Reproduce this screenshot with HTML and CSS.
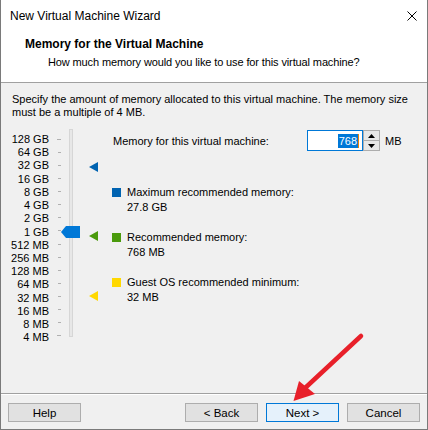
FILE: index.html
```html
<!DOCTYPE html>
<html>
<head>
<meta charset="utf-8">
<link rel="stylesheet" href="styles.css">
</head>
<body>
<div class="window">
  <div class="titlebar">
    <span class="title">New Virtual Machine Wizard</span>
    <svg class="close" width="10" height="10" viewBox="0 0 10 10"><path d="M0.5 0.5 L9.5 9.5 M9.5 0.5 L0.5 9.5" stroke="#000" stroke-width="1" fill="none"/></svg>
  </div>
  <div class="header">
    <div class="h-title">Memory for the Virtual Machine</div>
    <div class="h-sub">How much memory would you like to use for this virtual machine?</div>
  </div>
  <div class="content">
    <p class="intro"><span>Specify the amount of memory allocated to this virtual machine. The memory size</span><span>must be a multiple of 4 MB.</span></p>
    <div class="main">
      <div class="slider">
        <div class="labels">
          <span>128 GB</span><span>64 GB</span><span>32 GB</span><span>16 GB</span><span>8 GB</span><span>4 GB</span><span>2 GB</span><span>1 GB</span><span>512 MB</span><span>256 MB</span><span>128 MB</span><span>64 MB</span><span>32 MB</span><span>16 MB</span><span>8 MB</span><span>4 MB</span>
        </div>
        <div class="ticks">
          <i class="long"></i><i></i><i></i><i></i><i></i><i></i><i></i><i></i><i></i><i></i><i></i><i></i><i></i><i></i><i></i><i class="long"></i>
        </div>
        <div class="track"></div>
        <svg class="thumb" width="19" height="12" viewBox="0 0 19 12"><path d="M0 6 L5 0 H19 V12 H5 Z" fill="#0078d7"/></svg>
        <svg class="marker m-max" width="9" height="10" viewBox="0 0 9 10"><path d="M0 5 L9 0 V10 Z" fill="#0063b1"/></svg>
        <svg class="marker m-rec" width="9" height="10" viewBox="0 0 9 10"><path d="M0 5 L9 0 V10 Z" fill="#4a9a0c"/></svg>
        <svg class="marker m-min" width="9" height="10" viewBox="0 0 9 10"><path d="M0 5 L9 0 V10 Z" fill="#ffd800"/></svg>
      </div>
      <div class="pane">
        <div class="mem-row">
          <span class="mem-label">Memory for this virtual machine:</span>
          <div class="spin">
            <div class="spin-input"><span class="sel">768</span><span class="caret"></span></div>
            <div class="spin-btns">
              <div class="sbtn"><svg width="7" height="4" viewBox="0 0 7 4"><path d="M3.5 0 L7 4 H0 Z" fill="#000"/></svg></div>
              <div class="sbtn"><svg width="7" height="4" viewBox="0 0 7 4"><path d="M0 0 H7 L3.5 4 Z" fill="#000"/></svg></div>
            </div>
          </div>
          <span class="unit">MB</span>
        </div>
        <div class="legend">
          <div class="item"><span class="sq sq-blue"></span><div><div>Maximum recommended memory:</div><div>27.8 GB</div></div></div>
          <div class="item"><span class="sq sq-green"></span><div><div>Recommended memory:</div><div>768 MB</div></div></div>
          <div class="item"><span class="sq sq-yellow"></span><div><div>Guest OS recommended minimum:</div><div>32 MB</div></div></div>
        </div>
      </div>
    </div>
  </div>
  <div class="footer">
    <button class="btn">Help</button>
    <div class="spacer"></div>
    <button class="btn">&lt; Back</button>
    <button class="btn btn-default">Next &gt;</button>
    <button class="btn">Cancel</button>
  </div>
  <svg class="arrow" width="428" height="430" viewBox="0 0 428 430">
    <path d="M360 336 L303 389" stroke="#e8202a" stroke-width="4.5" stroke-linecap="round" fill="none"/>
    <path d="M292.5 401 L298 381 L314 394 Z" fill="#e8202a"/>
  </svg>
</div>
</body>
</html>
```
FILE: styles.css
```css
* { box-sizing: border-box; }
html, body { margin: 0; padding: 0; }
body {
  font-family: "Liberation Sans", Arial, sans-serif;
  font-size: 11px;
  color: #000;
  background: #f0f0f0;
}
.window {
  position: relative;
  width: 428px;
  height: 430px;
  border-left: 1px solid #7a7a7a;
  border-right: 1px solid #7a7a7a;
  border-bottom: 1px solid #7a7a7a;
  background: #f0f0f0;
  display: flex;
  flex-direction: column;
}
.titlebar {
  height: 32px;
  background: #fff;
  display: flex;
  align-items: center;
  padding: 0 10px 0 9px;
}
.title { flex: 1; font-size: 12px; line-height: 16px; }
.header {
  height: 51px;
  background: #fff;
  border-bottom: 1px solid #a0a0a0;
  padding-top: 4px;
}
.h-title { font-weight: bold; padding-left: 24px; line-height: 16px; font-size: 12px; }
.h-sub { padding-left: 47px; line-height: 16px; margin-top: 2px; letter-spacing: -0.12px; }
.content { flex: 1; padding: 10px 0 0 11px; }
.intro { margin: 0; line-height: 13px; display: flex; flex-direction: column; white-space: nowrap; }
.main { display: flex; margin-top: 14px; }
.slider { position: relative; display: flex; width: 100px; height: 215px; }
.labels {
  width: 37px;
  display: flex;
  flex-direction: column;
  align-items: flex-end;
}
.labels span { height: 13.23px; line-height: 13.23px; white-space: nowrap; }
.ticks { display: flex; flex-direction: column; margin-left: 8px; padding-top: 6px; }
.ticks i { display: block; height: 1px; width: 3px; margin-left: 1px; background: #b0b0b0; margin-bottom: 12.23px; }
.ticks i.long { width: 4px; margin-left: 0; }
.track {
  margin-left: 8px;
  margin-top: -4px;
  width: 4px;
  height: 208px;
  border: 1px solid #d6d6d6;
  background: #e7e7e7;
}
.thumb { position: absolute; left: 49px; top: 93px; }
.marker { position: absolute; left: 77px; }
.m-max { top: 29px; }
.m-rec { top: 98px; }
.m-min { top: 158px; }
.pane { display: flex; flex-direction: column; }
.mem-row { display: flex; align-items: center; margin-top: -3px; height: 21px; }
.mem-label { width: 195px; padding-left: 1px; }
.spin { display: flex; }
.spin-input {
  width: 56px;
  height: 21px;
  border: 1px solid #0078d7;
  background: #fff;
  display: flex;
  justify-content: flex-end;
  align-items: center;
  padding-right: 3px;
}
.sel { background: #0078d7; color: #fff; line-height: 14px; padding: 0 1px; }
.caret { width: 1px; height: 14px; background: #f08000; }
.spin-btns { display: flex; flex-direction: column; width: 17px; height: 21px; }
.sbtn {
  flex: 1;
  border: 1px solid #adadad;
  background: #e8e8e8;
  display: flex;
  align-items: center;
  justify-content: center;
}
.sbtn + .sbtn { border-top: none; }
.unit { margin-left: 5px; }
.legend { display: flex; flex-direction: column; gap: 16px; margin-top: 34px; }
.item { display: flex; line-height: 14.5px; }
.sq { width: 9px; height: 9px; margin: 3px 6px 0 0; display: block; }
.sq-blue { background: #0063b1; }
.sq-green { background: #4a9a0c; }
.sq-yellow { background: #ffd800; }
.footer {
  height: 36px;
  border-top: 1px solid #a0a0a0;
  box-shadow: inset 0 1px 0 #fff;
  display: flex;
  align-items: flex-start;
  padding: 9px 7px 0 7px;
  gap: 8px;
}
.spacer { flex: 1; }
.btn {
  width: 73px;
  height: 19px;
  font-family: inherit;
  font-size: 11.5px;
  background: #e1e1e1;
  border: 1px solid #adadad;
  padding: 0;
  color: #000;
  line-height: 16px;
}
.btn-default { border-color: #0078d7; background: #e5f1fb; }
.arrow { position: absolute; left: 0; top: 0; pointer-events: none; }
```
